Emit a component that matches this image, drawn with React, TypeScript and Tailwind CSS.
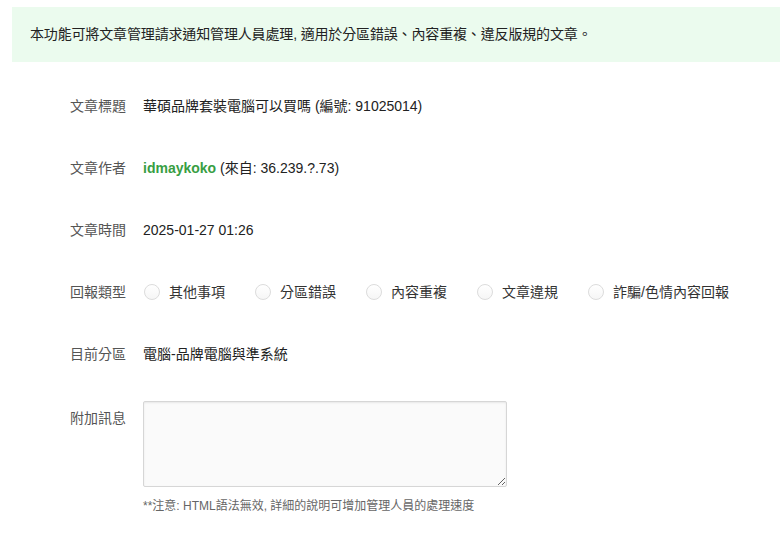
import React from "react";

const font = { fontFamily: '"Liberation Sans", "Noto Sans CJK TC", sans-serif' };

function Row({ label, children }: { label: string; children: React.ReactNode }) {
  return (
    <div className="flex h-[62px] items-center">
      <div className="w-[73px] shrink-0 text-[14px] text-[#555]">{label}</div>
      <div className="text-[14px] text-[#222]">{children}</div>
    </div>
  );
}

const options = ["其他事項", "分區錯誤", "內容重複", "文章違規", "詐騙/色情內容回報"];

export default function App() {
  return (
    <div className="min-h-[535px] bg-white pl-[12px] pt-[7px]" style={font}>
      <div className="flex h-[55px] items-center bg-[#ebfbee] pl-[18px] text-[14px] tracking-[-0.15px] text-[#222]">
        本功能可將文章管理請求通知管理人員處理, 適用於分區錯誤、內容重複、違反版規的文章。
      </div>
      <div className="pl-[58px] pt-[13px]">
        <Row label="文章標題">華碩品牌套裝電腦可以買嗎 (編號: 91025014)</Row>
        <Row label="文章作者">
          <span className="font-bold text-[#389e43]">idmaykoko</span> (來自: 36.239.?.73)
        </Row>
        <Row label="文章時間">2025-01-27 01:26</Row>
        <div className="flex h-[62px] items-center">
          <div className="w-[73px] shrink-0 text-[14px] text-[#555]">回報類型</div>
          <div className="flex items-center gap-[29px]">
            {options.map((o) => (
              <label key={o} className="flex items-center gap-[9px] text-[14px] text-[#333]">
                <span className="ml-[1px] h-[16px] w-[16px] rounded-full border border-[#dcdcdc] bg-gradient-to-b from-white to-[#f6f6f6]" />
                <span>{o}</span>
              </label>
            ))}
          </div>
        </div>
        <Row label="目前分區">電腦-品牌電腦與準系統</Row>
        <div className="mt-[16px] flex">
          <div className="w-[73px] shrink-0 pt-[7px] text-[14px] text-[#555]">附加訊息</div>
          <div>
            <textarea className="block h-[86px] w-[364px] rounded-[2px] border border-[#d6d6d6] bg-[#fafafa] shadow-[inset_0_1px_2px_rgba(0,0,0,0.08)] outline-none" />
            <div className="mt-[10px] text-[12px] text-[#666]">**注意: HTML語法無效, 詳細的說明可增加管理人員的處理速度</div>
          </div>
        </div>
      </div>
    </div>
  );
}
